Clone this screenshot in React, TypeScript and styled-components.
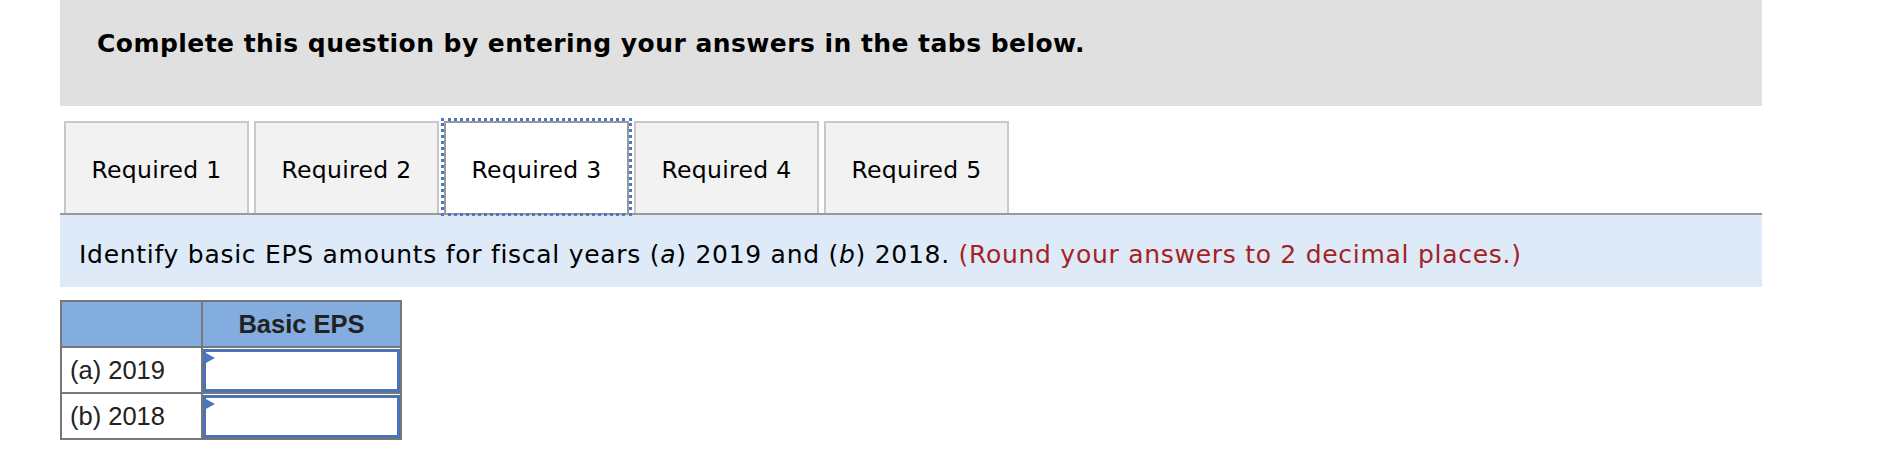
import styled, { createGlobalStyle } from "styled-components";

const GlobalStyle = createGlobalStyle`
  html, body {
    margin: 0;
    padding: 0;
    background: #ffffff;
  }
`;

const Page = styled.div`
  width: 1702px;
  margin-left: 60px;
  font-family: "DejaVu Sans", Verdana, sans-serif;
  color: #000;
`;

const Banner = styled.div`
  height: 106px;
  box-sizing: border-box;
  padding: 27px 37px 0;
  background: #e0e0e0;
  font-size: 25px;
  font-weight: 700;
  letter-spacing: 0.45px;
  line-height: 34px;
`;

const TabBar = styled.div`
  display: flex;
  gap: 5px;
  margin-top: 15px;
  padding-left: 4px;
  border-bottom: 2px solid #999999;
`;

const Tab = styled.div<{ $active?: boolean }>`
  width: 185px;
  height: 92px;
  box-sizing: border-box;
  padding-top: 4px;
  display: flex;
  align-items: center;
  justify-content: center;
  font-size: 23.5px;
  letter-spacing: 0.3px;
  background: ${(p) => (p.$active ? "#ffffff" : "#f2f2f2")};
  border: 2px solid ${(p) => (p.$active ? "#999999" : "#c8c8c8")};
  border-bottom: none;
  outline: ${(p) => (p.$active ? "3px dotted #4a7bc0" : "none")};
  outline-offset: 0px;
`;

const Instruction = styled.div`
  height: 72px;
  box-sizing: border-box;
  padding: 23px 19px 0;
  background: #deeaf7;
  font-size: 25px;
  letter-spacing: 0.72px;
  line-height: 34px;
`;

const Note = styled.span`
  color: #a4231f;
`;

const Grid = styled.table`
  margin-top: 13px;
  border-collapse: collapse;
  font-family: "Liberation Sans", Arial, sans-serif;
  font-size: 25.5px;
  color: #222;
`;

const HeadCell = styled.th`
  height: 44px;
  padding: 0;
  background: #84addf;
  border: 2px solid #777777;
  font-weight: 700;
  text-align: center;
`;

const LabelCell = styled.td`
  width: 131px;
  height: 44px;
  padding: 0 0 0 8px;
  border: 2px solid #777777;
`;

const InputCell = styled.td`
  width: 197px;
  height: 44px;
  padding: 0;
  border: 2px solid #777777;
`;

const Field = styled.div`
  position: relative;
  height: 43px;
  box-sizing: border-box;
  border: 3px solid #4a72b5;
  background: #fff;
`;

const Marker = styled.span`
  position: absolute;
  left: -2px;
  top: 0;
  width: 0;
  height: 0;
  border-top: 6px solid transparent;
  border-bottom: 6px solid transparent;
  border-left: 11px solid #4a76c0;
`;

const tabs = ["Required 1", "Required 2", "Required 3", "Required 4", "Required 5"];
const rows = ["(a) 2019", "(b) 2018"];

export default function App() {
  return (
    <Page>
      <GlobalStyle />
      <Banner>Complete this question by entering your answers in the tabs below.</Banner>
      <TabBar>
        {tabs.map((t, i) => (
          <Tab key={t} $active={i === 2}>
            {t}
          </Tab>
        ))}
      </TabBar>
      <Instruction>
        Identify basic EPS amounts for fiscal years (<i>a</i>) 2019 and (<i>b</i>) 2018.{" "}
        <Note>(Round your answers to 2 decimal places.)</Note>
      </Instruction>
      <Grid>
        <thead>
          <tr>
            <HeadCell />
            <HeadCell>Basic EPS</HeadCell>
          </tr>
        </thead>
        <tbody>
          {rows.map((r) => (
            <tr key={r}>
              <LabelCell>{r}</LabelCell>
              <InputCell>
                <Field>
                  <Marker />
                </Field>
              </InputCell>
            </tr>
          ))}
        </tbody>
      </Grid>
    </Page>
  );
}
